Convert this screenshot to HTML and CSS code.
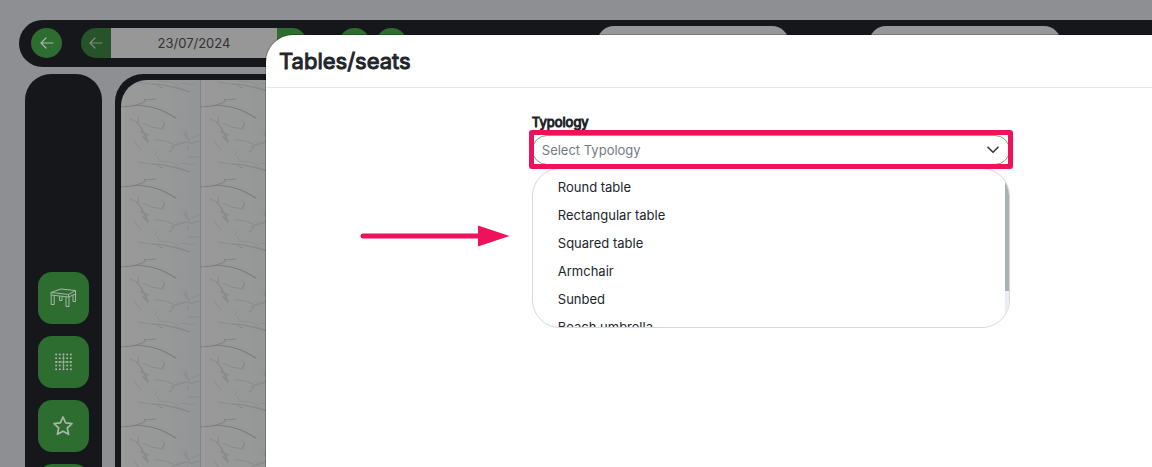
FILE: index.html
```html
<!DOCTYPE html>
<html lang="en">
<head>
<meta charset="utf-8">
<title>Tables/seats</title>
<link rel="stylesheet" href="styles.css">
</head>
<body>
<div class="app">
  <header class="topbar">
    <button class="round-btn" type="button" aria-label="Back">
      <svg class="arrow" viewBox="0 0 16 16"><path d="M14 8H2M7 3 2 8l5 5"/></svg>
    </button>
    <div class="date-picker">
      <button class="date-step date-prev" type="button" aria-label="Previous day">
        <svg class="arrow" viewBox="0 0 16 16"><path d="M14 8H2M7 3 2 8l5 5"/></svg>
      </button>
      <input class="date-input" type="text" value="23/07/2024" aria-label="Date">
      <button class="date-step date-next" type="button" aria-label="Next day"></button>
    </div>
    <div class="round-group">
      <button class="round-btn" type="button" aria-label="Calendar"></button>
      <button class="round-btn" type="button" aria-label="Refresh"></button>
    </div>
    <div class="filters">
      <input class="filter" type="text" aria-label="Room">
      <input class="filter" type="text" aria-label="Shift">
    </div>
  </header>
  <div class="workspace">
    <nav class="sidebar">
      <button class="tool" type="button" aria-label="Tables">
        <svg width="27" height="20" viewBox="0 0 27 20" fill="none" stroke="currentColor" stroke-linejoin="round">
          <path d="M1 4.500 11 1l14.500 1.500-7 4z"/>
          <path d="M1 4.500V7l17.500 2V6.500M18.500 9l7-3V2.500M1.200 7v9.500h3V7.500M16 9v9.500h3V9M23 7v6.500h2.500V5.500M9.500 8.200v4.300H12V8.500"/>
        </svg>
      </button>
      <button class="tool" type="button" aria-label="Grid">
        <svg width="17" height="18" viewBox="0 0 17 18" fill="none" stroke="currentColor" stroke-width="2" stroke-linecap="round" stroke-dasharray="0 3.700">
          <path d="M1.100 1.500h15M1.100 5.200h15M1.100 8.900h15M1.100 12.600h15M1.100 16.300h15"/>
          <path stroke-width="1.400" stroke-dasharray="0 1.850" d="M8.500 1.500v15M1.100 8.900h15"/>
        </svg>
      </button>
      <button class="tool" type="button" aria-label="Favourites">
        <svg width="21" height="22" viewBox="0 0 21 22" fill="none" stroke="currentColor" stroke-width="1.700" stroke-linejoin="round">
          <path d="m10 2 2.700 5.900 6.300.8-4.700 4.300 1.300 6.300-5.600-3.100-5.600 3.100L5.700 13 1 8.700l6.300-.8z"/>
        </svg>
      </button>
      <button class="tool" type="button" aria-label="More"></button>
    </nav>
    <main class="floor">
      <svg class="marble" aria-hidden="true">
        <defs>
          <linearGradient id="shade" x1="0" x2="1" y1="0" y2="0">
            <stop offset="0" stop-color="#999999"/><stop offset=".6" stop-color="#979898"/><stop offset="1" stop-color="#929697"/>
          </linearGradient>
          <pattern id="tile" width="80" height="80" patternUnits="userSpaceOnUse">
            <rect width="80" height="80" fill="url(#shade)"/>
            <g fill="none" stroke="#7b7b7b" stroke-linecap="round" stroke-linejoin="round">
              <path stroke-width="1.200" d="M0 27 10 26 17 25 30 27 40 30 48 34 55 38"/>
              <path stroke-width="1" opacity=".7" d="M12 26l6-2 6-2v-3M23 20l12-1M31 4l12 1 12 3 14 4M42 8l-5-2"/>
              <path stroke-width="1.800" opacity=".45" d="M16 42l4 6 4 7 3 6M20 52l7 3M22 57l5 5"/>
              <path stroke-width="1" opacity=".55" d="M9 39l7 3M17 36l1 6M22 43l8 4 12 2M41 41l3 3-3 4M44 43l-2 5"/>
              <path stroke-width="1.600" opacity=".4" d="M53 68l-5 4M56 65l8-3 7 1 8-2M50 67l7-3M63 53l5 7"/>
              <path stroke-width="1" opacity=".45" d="M34 60l10 1 8 3M64 50l3 6M79 54l-8 4M34 71l2 2-2 2M36 77l2 2M66 66l2 3-2 2M67 77h12M14 62l6 8M17 2l12 2"/>
              <path stroke-width="1" opacity=".35" d="M38 1l12 1 7 3M52 6l16 5M60 3l14 2"/>
            </g>
            <path d="M79.500 0v80" stroke="#82878a"/>
            <path d="M2.500 0v80" stroke="#a0a2a2" opacity=".5"/>
          </pattern>
        </defs>
        <rect width="100%" height="100%" fill="url(#tile)"/>
      </svg>
    </main>
  </div>
</div>

<section class="modal" role="dialog" aria-labelledby="modal-title">
  <header class="modal-header"><h1 class="modal-title" id="modal-title">Tables/seats</h1></header>
  <div class="modal-body">
    <div class="field">
      <label class="field-label" for="typology">Typology</label>
      <div class="select-wrap">
        <select class="select" id="typology">
          <option>Select Typology</option>
          <option>Round table</option>
          <option>Rectangular table</option>
          <option>Squared table</option>
          <option>Armchair</option>
          <option>Sunbed</option>
          <option>Beach umbrella</option>
        </select>
        <svg class="chevron" viewBox="0 0 12 8"><path d="m1 1.200 5 5 5-5"/></svg>
        <div class="highlight"></div>
        <svg class="pointer" viewBox="0 0 150 22"><path d="M3 11h116" stroke="#ed125b" stroke-width="5" stroke-linecap="round"/><path d="M118 .5 149.500 11 118 21.500z" fill="#ed125b"/></svg>
      </div>
      <div class="dropdown">
        <ul class="options" role="listbox" aria-label="Typology">
          <li class="option" role="option">Round table</li>
          <li class="option" role="option">Rectangular table</li>
          <li class="option" role="option">Squared table</li>
          <li class="option" role="option">Armchair</li>
          <li class="option" role="option">Sunbed</li>
          <li class="option" role="option">Beach umbrella</li>
        </ul>
        <div class="scrollbar"><div class="scroll-thumb"></div></div>
      </div>
    </div>
  </div>
</section>
</body>
</html>
```
FILE: styles.css
```css
* { box-sizing: border-box; }

body {
  margin: 0;
  height: 100vh;
  overflow: hidden;
  position: relative;
  background: #8e8f93;
  color: #212529;
  font-family: Inter, "Liberation Sans", sans-serif;
  font-size: 13px;
}

button, input, select { font: inherit; border: 0; margin: 0; padding: 0; }

.app {
  height: 100%;
  display: flex;
  flex-direction: column;
  gap: 7px;
  padding: 20px 0 0 19px;
}

.topbar {
  flex: none;
  display: flex;
  align-items: center;
  height: 47px;
  padding: 0 0 1px 12px;
  background: #16171b;
  border-radius: 24px 0 0 24px;
}

.round-btn, .date-step {
  display: flex;
  align-items: center;
  justify-content: center;
  background: #2e6d30;
  color: #a9b5a9;
}

.round-btn { width: 31px; height: 30px; border-radius: 50%; }

.arrow {
  width: 16px;
  height: 16px;
  fill: none;
  stroke: currentColor;
  stroke-width: 1.2;
  stroke-linecap: round;
  stroke-linejoin: round;
}

.date-picker { display: flex; height: 30px; margin-left: 19px; }
.date-step { width: 30px; }
.date-prev { border-radius: 15px 0 0 15px; background: #26532a; color: #7b8e7d; }
.date-next { border-radius: 0 15px 15px 0; }
.date-input { width: 166px; background: #979797; color: #303235; text-align: center; }

.round-group { display: flex; gap: 6px; margin-left: 32px; }

.filters { display: flex; gap: 80px; margin-left: 190px; }
.filter { width: 192px; height: 34px; border-radius: 17px; background: #979797; }

.workspace { flex: 1; min-height: 0; display: flex; gap: 13px; padding-left: 6px; }

.sidebar {
  width: 77px;
  flex: none;
  display: flex;
  flex-direction: column;
  align-items: center;
  gap: 12px;
  padding-top: 198px;
  overflow: hidden;
  background: #16171b;
  border-radius: 26px 26px 0 0;
}

.tool {
  flex: none;
  display: flex;
  align-items: center;
  justify-content: center;
  width: 51px;
  height: 52px;
  border-radius: 14px;
  background: #2e6d30;
  color: #a9b5a9;
}

.floor {
  flex: 1;
  min-width: 0;
  padding: 6px 0 0 6px;
  background: #16171b;
  border-radius: 28px 0 0 0;
}

.marble { display: block; width: 100%; height: 100%; border-radius: 26px 0 0 0; }

.modal {
  position: absolute;
  inset: 35px 0 0 266px;
  background: #fff;
  border-radius: 27px 0 0 0;
  box-shadow: 0 0 0 1px rgba(0, 0, 0, .2);
}

.modal-header { height: 53px; padding: 12px 13px; border-bottom: 1px solid #e6e7e8; }
.modal-title { margin: 0; font-size: 22px; font-weight: 400; line-height: 28px; -webkit-text-stroke: 1px currentColor; }

.modal-body { padding-top: 24px; }
.field { width: 54%; margin-left: 30%; }
.field-label { display: block; line-height: 20px; font-weight: 400; -webkit-text-stroke: 1px currentColor; }

.select-wrap { position: relative; margin-top: 3px; }

.select {
  display: block;
  appearance: none;
  width: 100%;
  height: 30px;
  padding: 0 9px;
  border: 1px solid #62b866;
  border-radius: 15px;
  background: #fff;
  color: #737b83;
}

.chevron {
  position: absolute;
  top: 11px;
  right: 11px;
  width: 12px;
  height: 8px;
  fill: none;
  stroke: #343a40;
  stroke-width: 1.6;
  stroke-linecap: round;
  stroke-linejoin: round;
}

.highlight {
  position: absolute;
  inset: -5px -3px -4px -3px;
  border: 5px solid #ed125b;
  border-radius: 3px;
}

.pointer { position: absolute; top: 90px; right: calc(100% + 22px); width: 150px; height: 22px; }

.dropdown {
  display: flex;
  height: 160px;
  margin-top: 3px;
  overflow: hidden;
  border: 1px solid #d5d7da;
  border-radius: 28px;
}

.options { flex: 1; margin: 0; padding: 4px 0 0; list-style: none; }
.option { padding: 0 25px; line-height: 28px; }
.scrollbar { width: 4px; background: #e9edf3; }
.scroll-thumb { height: 77%; background: #a9b1b5; }
```
